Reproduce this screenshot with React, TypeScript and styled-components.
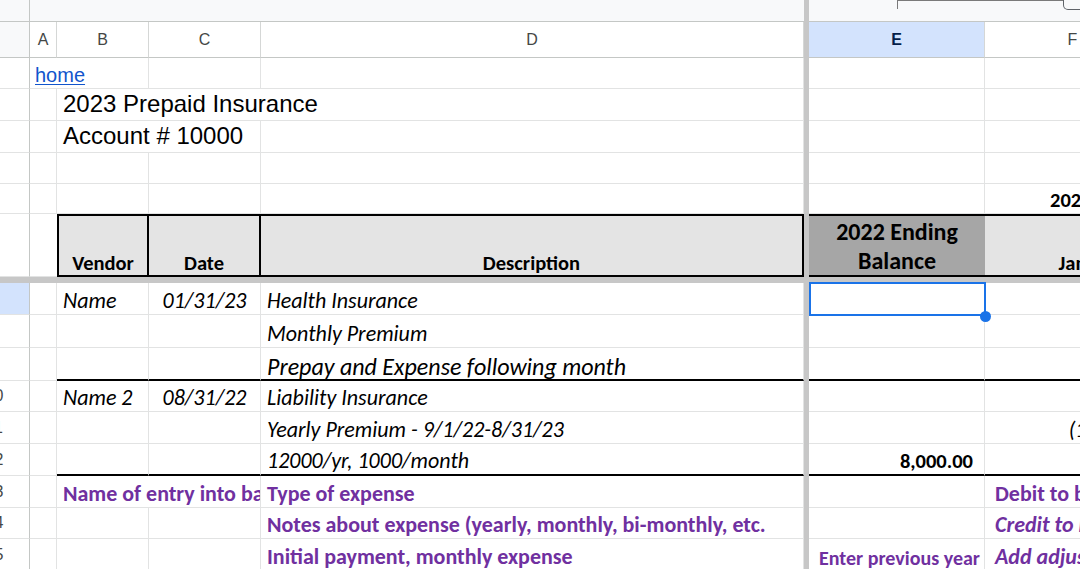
import React from 'react';
import styled, { createGlobalStyle, css } from 'styled-components';

const GRID = '#e2e3e3';
const HEAD_LINE = '#c4c7c5';
const FREEZE = '#c7c7c7';
const BLACK = '2px solid #000';
const COLS = '30px 27px 92px 112px 543px 5px 176px 176px';

const Global = createGlobalStyle`
  html, body { margin: 0; padding: 0; background: #fff; }
  body { width: 1080px; height: 569px; overflow: hidden; }
  *, *::before, *::after { box-sizing: border-box; }
`;

const Sheet = styled.div`
  width: 1080px;
  height: 569px;
  overflow: hidden;
  background: #fff;
  display: flex;
  flex-direction: column;
`;

const Row = styled.div<{ $h: number }>`
  display: grid;
  grid-template-columns: ${COLS};
  width: 1161px;
  height: ${(p) => p.$h}px;
  flex-shrink: 0;
`;

const FreezeBar = styled.div`
  width: 1161px;
  height: 6px;
  flex-shrink: 0;
  background: ${FREEZE};
`;

/* ---------- toolbar strip ---------- */
const Strip = styled.div<{ $span?: number; $edge?: boolean; $pl?: number }>`
  grid-column: span ${(p) => p.$span ?? 1};
  background: #f8f9fa;
  border-bottom: 1px solid ${HEAD_LINE};
  border-right: ${(p) => (p.$edge ? `1px solid ${HEAD_LINE}` : 'none')};
  display: flex;
  align-items: flex-start;
  padding-left: ${(p) => p.$pl ?? 0}px;
  overflow: hidden;
`;

const Bracket = styled.div`
  width: 166px;
  height: 9px;
  flex-shrink: 0;
  border-left: 1.5px solid #7a7a7a;
  border-top: 1.5px solid #7a7a7a;
`;

const Handle = styled.div`
  width: 40px;
  height: 10px;
  flex-shrink: 0;
  border: 1.5px solid #5f6368;
  border-top: none;
  border-radius: 0 0 5px 5px;
`;

/* ---------- column headers ---------- */
const ColHead = styled.div<{ $sel?: boolean; $corner?: boolean }>`
  display: flex;
  align-items: center;
  justify-content: center;
  font-family: 'Liberation Sans', Arial, sans-serif;
  font-size: 16px;
  color: ${(p) => (p.$sel ? '#041e49' : '#444746')};
  font-weight: ${(p) => (p.$sel ? 700 : 400)};
  background: ${(p) => (p.$sel ? '#d3e3fd' : p.$corner ? '#f8f9fa' : '#fff')};
  border-right: 1px solid ${(p) => (p.$corner ? HEAD_LINE : '#d5d7d6')};
  border-bottom: 1px solid ${HEAD_LINE};
`;

const Freeze = styled.div`
  background: ${FREEZE};
`;

/* ---------- row numbers ---------- */
const RowNum = styled.div<{ $sel?: boolean }>`
  display: flex;
  align-items: center;
  justify-content: flex-end;
  overflow: hidden;
  background: ${(p) => (p.$sel ? '#d3e3fd' : '#fff')};
  border-right: 1px solid ${HEAD_LINE};
  border-bottom: 1px solid ${GRID};
  font-family: 'Liberation Sans', Arial, sans-serif;
  font-size: 16px;
  color: #444746;
`;

const RowNumLabel = styled.span`
  flex-shrink: 0;
  width: 69px;
  text-align: center;
`;

/* ---------- cells ---------- */
type Tone =
  | 'link'
  | 'title'
  | 'data'
  | 'dataLg'
  | 'bold'
  | 'boldLg'
  | 'note'
  | 'noteSm'
  | 'noteItalic';

const DATA_FONT = `Carlito, Calibri, Lato, sans-serif`;

const tones: Record<Tone, ReturnType<typeof css>> = {
  link: css`
    font-family: 'Liberation Sans', Arial, sans-serif;
    font-size: 20px;
    line-height: 1.2;
  `,
  title: css`
    font-family: 'Liberation Sans', Arial, sans-serif;
    font-size: 24px;
    line-height: 1.2;
    color: #000;
  `,
  data: css`
    font-family: ${DATA_FONT};
    font-style: italic;
    font-size: 22px;
    line-height: 1.1;
    color: #000;
  `,
  dataLg: css`
    font-family: ${DATA_FONT};
    font-style: italic;
    font-size: 24px;
    line-height: 1;
    color: #000;
  `,
  bold: css`
    font-family: ${DATA_FONT};
    font-weight: 700;
    font-size: 20.5px;
    line-height: 1.05;
    color: #000;
  `,
  boldLg: css`
    font-family: ${DATA_FONT};
    font-weight: 700;
    font-size: 24px;
    line-height: 29px;
    color: #000;
    text-align: center;
    white-space: normal;
  `,
  note: css`
    font-family: ${DATA_FONT};
    font-weight: 700;
    font-size: 22px;
    line-height: 1.15;
    color: #7030a0;
  `,
  noteSm: css`
    font-family: ${DATA_FONT};
    font-weight: 700;
    font-size: 20px;
    line-height: 1.1;
    color: #7030a0;
  `,
  noteItalic: css`
    font-family: ${DATA_FONT};
    font-weight: 700;
    font-style: italic;
    font-size: 22px;
    line-height: 1.15;
    color: #7030a0;
  `,
};

interface CellProps {
  $span?: number;
  $align?: 'left' | 'center' | 'right';
  $v?: 'end' | 'center';
  $pl?: number;
  $pr?: number;
  $pb?: number;
  $bg?: string;
  $top?: string;
  $right?: string;
  $bottom?: string;
  $left?: string;
  $tone?: Tone;
  $sel?: boolean;
}

const Cell = styled.div<CellProps>`
  position: ${(p) => (p.$sel ? 'relative' : 'static')};
  grid-column: span ${(p) => p.$span ?? 1};
  display: flex;
  align-items: ${(p) => (p.$v === 'center' ? 'center' : 'flex-end')};
  justify-content: ${(p) =>
    p.$align === 'center' ? 'center' : p.$align === 'right' ? 'flex-end' : 'flex-start'};
  padding: 0 ${(p) => p.$pr ?? 6}px ${(p) => p.$pb ?? 1}px ${(p) => p.$pl ?? 6}px;
  background: ${(p) => p.$bg ?? '#fff'};
  border-top: ${(p) => p.$top ?? 'none'};
  border-right: ${(p) => p.$right ?? `1px solid ${GRID}`};
  border-bottom: ${(p) => p.$bottom ?? `1px solid ${GRID}`};
  border-left: ${(p) => p.$left ?? 'none'};
  overflow: ${(p) => (p.$sel ? 'visible' : 'hidden')};
  white-space: nowrap;
  ${(p) => tones[p.$tone ?? 'data']}
`;

const Text = styled.span`
  flex-shrink: 0;
`;

const Link = styled.a`
  color: #1155cc;
  text-decoration: underline;
  text-decoration-thickness: 1px;
  text-underline-offset: 2px;
  flex-shrink: 0;
`;

const Selection = styled.div`
  position: absolute;
  top: -1px;
  left: 0;
  right: -2px;
  bottom: -2px;
  border: 2px solid #1a73e8;
  z-index: 2;
  pointer-events: none;
`;

const FillHandle = styled.div`
  position: absolute;
  right: -7px;
  bottom: -8px;
  width: 11px;
  height: 11px;
  border-radius: 50%;
  background: #1a73e8;
  z-index: 3;
`;

const HEAD_BG = '#e4e4e4';

export default function App() {
  return (
    <>
      <Global />
      <Sheet>
        {/* toolbar strip */}
        <Row $h={22}>
          <Strip $edge />
          <Strip $span={4} />
          <Freeze />
          <Strip $span={2} $pl={88}>
            <Bracket />
            <Handle />
          </Strip>
        </Row>

        {/* column letters */}
        <Row $h={36}>
          <ColHead $corner />
          <ColHead>A</ColHead>
          <ColHead>B</ColHead>
          <ColHead>C</ColHead>
          <ColHead>D</ColHead>
          <Freeze />
          <ColHead $sel>E</ColHead>
          <ColHead>F</ColHead>
        </Row>

        {/* 1 */}
        <Row $h={31}>
          <RowNum><RowNumLabel>1</RowNumLabel></RowNum>
          <Cell $span={2} $pl={5} $tone="link">
            <Link href="#home">home</Link>
          </Cell>
          <Cell />
          <Cell />
          <Freeze />
          <Cell />
          <Cell />
        </Row>

        {/* 2 */}
        <Row $h={32}>
          <RowNum><RowNumLabel>2</RowNumLabel></RowNum>
          <Cell />
          <Cell $span={3} $tone="title"><Text>2023 Prepaid Insurance</Text></Cell>
          <Freeze />
          <Cell />
          <Cell />
        </Row>

        {/* 3 */}
        <Row $h={32}>
          <RowNum><RowNumLabel>3</RowNumLabel></RowNum>
          <Cell />
          <Cell $span={2} $tone="title"><Text>Account # 10000</Text></Cell>
          <Cell />
          <Freeze />
          <Cell />
          <Cell />
        </Row>

        {/* 4 */}
        <Row $h={31}>
          <RowNum><RowNumLabel>4</RowNumLabel></RowNum>
          <Cell />
          <Cell />
          <Cell />
          <Cell />
          <Freeze />
          <Cell />
          <Cell />
        </Row>

        {/* 5 */}
        <Row $h={30}>
          <RowNum><RowNumLabel>5</RowNumLabel></RowNum>
          <Cell />
          <Cell />
          <Cell />
          <Cell />
          <Freeze />
          <Cell />
          <Cell $pl={65} $tone="bold"><Text>2023 Amortization Schedule</Text></Cell>
        </Row>

        {/* 6 : table header */}
        <Row $h={63}>
          <RowNum><RowNumLabel>6</RowNumLabel></RowNum>
          <Cell $right="none" />
          <Cell $bg={HEAD_BG} $top={BLACK} $bottom={BLACK} $left={BLACK} $right={BLACK} $align="center" $pb={0} $tone="bold">
            <Text>Vendor</Text>
          </Cell>
          <Cell $bg={HEAD_BG} $top={BLACK} $bottom={BLACK} $right={BLACK} $align="center" $pb={0} $tone="bold">
            <Text>Date</Text>
          </Cell>
          <Cell $bg={HEAD_BG} $top={BLACK} $bottom={BLACK} $right={BLACK} $align="center" $pb={0} $tone="bold">
            <Text>Description</Text>
          </Cell>
          <Freeze />
          <Cell $bg="#a6a6a6" $top={BLACK} $bottom={BLACK} $right="none" $align="center" $v="center" $pb={0} $tone="boldLg">
            <Text>2022 Ending<br />Balance</Text>
          </Cell>
          <Cell $bg={HEAD_BG} $top={BLACK} $bottom={BLACK} $align="center" $pb={0} $tone="bold">
            <Text>Jan</Text>
          </Cell>
        </Row>

        <FreezeBar />

        {/* 7 */}
        <Row $h={32}>
          <RowNum $sel><RowNumLabel>7</RowNumLabel></RowNum>
          <Cell />
          <Cell><Text>Name</Text></Cell>
          <Cell $align="center"><Text>01/31/23</Text></Cell>
          <Cell><Text>Health Insurance</Text></Cell>
          <Freeze />
          <Cell $sel>
            <Selection />
            <FillHandle />
          </Cell>
          <Cell />
        </Row>

        {/* 8 */}
        <Row $h={33}>
          <RowNum><RowNumLabel>8</RowNumLabel></RowNum>
          <Cell />
          <Cell />
          <Cell />
          <Cell><Text>Monthly Premium</Text></Cell>
          <Freeze />
          <Cell />
          <Cell />
        </Row>

        {/* 9 */}
        <Row $h={33}>
          <RowNum><RowNumLabel>9</RowNumLabel></RowNum>
          <Cell />
          <Cell $bottom={BLACK} />
          <Cell $bottom={BLACK} />
          <Cell $bottom={BLACK} $pb={0} $tone="dataLg"><Text>Prepay and Expense following month</Text></Cell>
          <Freeze />
          <Cell $bottom={BLACK} />
          <Cell $bottom={BLACK} />
        </Row>

        {/* 10 */}
        <Row $h={31}>
          <RowNum><RowNumLabel>10</RowNumLabel></RowNum>
          <Cell />
          <Cell><Text>Name 2</Text></Cell>
          <Cell $align="center"><Text>08/31/22</Text></Cell>
          <Cell><Text>Liability Insurance</Text></Cell>
          <Freeze />
          <Cell />
          <Cell />
        </Row>

        {/* 11 */}
        <Row $h={32}>
          <RowNum><RowNumLabel>11</RowNumLabel></RowNum>
          <Cell />
          <Cell />
          <Cell />
          <Cell><Text>Yearly Premium - 9/1/22-8/31/23</Text></Cell>
          <Freeze />
          <Cell />
          <Cell $align="right" $pr={0}><Text>(1,000.00)</Text></Cell>
        </Row>

        {/* 12 */}
        <Row $h={32}>
          <RowNum><RowNumLabel>12</RowNumLabel></RowNum>
          <Cell />
          <Cell $bottom={BLACK} />
          <Cell $bottom={BLACK} />
          <Cell $bottom={BLACK}><Text>12000/yr, 1000/month</Text></Cell>
          <Freeze />
          <Cell $bottom={BLACK} $align="right" $pr={11} $tone="bold"><Text>8,000.00</Text></Cell>
          <Cell $bottom={BLACK} />
        </Row>

        {/* 13 */}
        <Row $h={32}>
          <RowNum><RowNumLabel>13</RowNumLabel></RowNum>
          <Cell />
          <Cell $span={2} $tone="note"><Text>Name of entry into balance sheet</Text></Cell>
          <Cell $tone="note"><Text>Type of expense</Text></Cell>
          <Freeze />
          <Cell />
          <Cell $pl={10} $tone="note"><Text>Debit to balance sheet</Text></Cell>
        </Row>

        {/* 14 */}
        <Row $h={31}>
          <RowNum><RowNumLabel>14</RowNumLabel></RowNum>
          <Cell />
          <Cell />
          <Cell />
          <Cell $tone="note"><Text>Notes about expense (yearly, monthly, bi-monthly, etc.</Text></Cell>
          <Freeze />
          <Cell />
          <Cell $pl={10} $tone="noteItalic"><Text>Credit to balance sheet</Text></Cell>
        </Row>

        {/* 15 */}
        <Row $h={32}>
          <RowNum><RowNumLabel>15</RowNumLabel></RowNum>
          <Cell />
          <Cell />
          <Cell />
          <Cell $tone="note"><Text>Initial payment, monthly expense</Text></Cell>
          <Freeze />
          <Cell $pl={10} $tone="noteSm"><Text>Enter previous year</Text></Cell>
          <Cell $pl={10} $tone="noteItalic"><Text>Add adjustments</Text></Cell>
        </Row>
      </Sheet>
    </>
  );
}
